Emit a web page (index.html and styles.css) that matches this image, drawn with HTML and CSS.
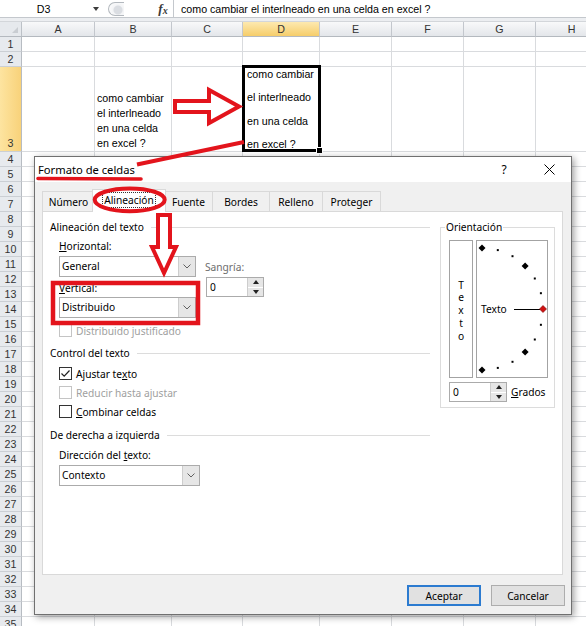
FILE: index.html
```html
<!DOCTYPE html>
<html lang="es">
<head>
<meta charset="utf-8">
<title>Formato de celdas</title>
<link rel="stylesheet" href="styles.css">
</head>
<body>
<div class="app">
  <div class="fbar">
    <div class="namebox"><span class="nb-text">D3</span><span class="nb-arrow"></span></div>
    <div class="grip"><span class="knob"></span></div>
    <div class="fx"><span>f</span><span class="fx-x">x</span></div>
    <div class="formula">como cambiar el interlneado en una celda en excel ?</div>
  </div>
  <div class="band"></div>
  <div class="sheet">
    <div class="corner"><span class="tri"></span></div>
    <div class="ch">A</div><div class="ch">B</div><div class="ch">C</div><div class="ch on">D</div><div class="ch">E</div><div class="ch">F</div><div class="ch">G</div><div class="ch">H</div>
    <b>1</b><i></i><i></i><i></i><i></i><i></i><i></i><i></i><i></i>
    <b>2</b><i></i><i></i><i></i><i></i><i></i><i></i><i></i><i></i>
    <b class="on r3">3</b><i></i><i class="b3"><span>como cambiar</span><span>el interlneado</span><span>en una celda</span><span>en excel ?</span></i><i></i><i class="d3"><span>como cambiar</span><span>el interlneado</span><span>en una celda</span><span>en excel ?</span><span class="handle"></span></i><i></i><i></i><i></i><i></i>
    <b>4</b><i></i><i></i><i></i><i></i><i></i><i></i><i></i><i></i>
    <b>5</b><i></i><i></i><i></i><i></i><i></i><i></i><i></i><i></i>
    <b>6</b><i></i><i></i><i></i><i></i><i></i><i></i><i></i><i></i>
    <b>7</b><i></i><i></i><i></i><i></i><i></i><i></i><i></i><i></i>
    <b>8</b><i></i><i></i><i></i><i></i><i></i><i></i><i></i><i></i>
    <b>9</b><i></i><i></i><i></i><i></i><i></i><i></i><i></i><i></i>
    <b>10</b><i></i><i></i><i></i><i></i><i></i><i></i><i></i><i></i>
    <b>11</b><i></i><i></i><i></i><i></i><i></i><i></i><i></i><i></i>
    <b>12</b><i></i><i></i><i></i><i></i><i></i><i></i><i></i><i></i>
    <b>13</b><i></i><i></i><i></i><i></i><i></i><i></i><i></i><i></i>
    <b>14</b><i></i><i></i><i></i><i></i><i></i><i></i><i></i><i></i>
    <b>15</b><i></i><i></i><i></i><i></i><i></i><i></i><i></i><i></i>
    <b>16</b><i></i><i></i><i></i><i></i><i></i><i></i><i></i><i></i>
    <b>17</b><i></i><i></i><i></i><i></i><i></i><i></i><i></i><i></i>
    <b>18</b><i></i><i></i><i></i><i></i><i></i><i></i><i></i><i></i>
    <b>19</b><i></i><i></i><i></i><i></i><i></i><i></i><i></i><i></i>
    <b>20</b><i></i><i></i><i></i><i></i><i></i><i></i><i></i><i></i>
    <b>21</b><i></i><i></i><i></i><i></i><i></i><i></i><i></i><i></i>
    <b>22</b><i></i><i></i><i></i><i></i><i></i><i></i><i></i><i></i>
    <b>23</b><i></i><i></i><i></i><i></i><i></i><i></i><i></i><i></i>
    <b>24</b><i></i><i></i><i></i><i></i><i></i><i></i><i></i><i></i>
    <b>25</b><i></i><i></i><i></i><i></i><i></i><i></i><i></i><i></i>
    <b>26</b><i></i><i></i><i></i><i></i><i></i><i></i><i></i><i></i>
    <b>27</b><i></i><i></i><i></i><i></i><i></i><i></i><i></i><i></i>
    <b>28</b><i></i><i></i><i></i><i></i><i></i><i></i><i></i><i></i>
    <b>29</b><i></i><i></i><i></i><i></i><i></i><i></i><i></i><i></i>
    <b>30</b><i></i><i></i><i></i><i></i><i></i><i></i><i></i><i></i>
    <b>31</b><i></i><i></i><i></i><i></i><i></i><i></i><i></i><i></i>
    <b>32</b><i></i><i></i><i></i><i></i><i></i><i></i><i></i><i></i>
    <b>33</b><i></i><i></i><i></i><i></i><i></i><i></i><i></i><i></i>
    <b>34</b><i></i><i></i><i></i><i></i><i></i><i></i><i></i><i></i>
    <b>35</b><i></i><i></i><i></i><i></i><i></i><i></i><i></i><i></i>
  </div>

  <div class="dialog">
    <div class="titlebar">
      <div class="title">Formato de celdas</div>
      <div class="help">?</div>
      <div class="close"><svg width="11" height="11" viewBox="0 0 11 11"><path d="M0.5 0.5 L10.5 10.5 M10.5 0.5 L0.5 10.5" stroke="#000" stroke-width="1" fill="none"/></svg></div>
    </div>
    <div class="dbody">
      <div class="tabs">
        <div class="tab t1">Número</div>
        <div class="tab t2 sel"><span class="focus">Alineación</span></div>
        <div class="tab t3">Fuente</div>
        <div class="tab t4">Bordes</div>
        <div class="tab t5">Relleno</div>
        <div class="tab t6">Proteger</div>
      </div>
      <div class="panel">
        <div class="leftcol">
          <div class="sec">Alineación del texto</div>
          <div class="hv">
            <div class="hv-main">
              <div class="lbl"><u>H</u>orizontal:</div>
              <div class="combo c-gen"><span class="val">General</span><span class="btn"><svg width="8" height="5" viewBox="0 0 8 5"><path d="M0.5 0.5 L4 4 L7.5 0.5" stroke="#606060" fill="none"/></svg></span></div>
              <div class="lbl l-vert"><u>V</u>ertical:</div>
              <div class="combo c-dist"><span class="val">Distribuido</span><span class="btn"><svg width="8" height="5" viewBox="0 0 8 5"><path d="M0.5 0.5 L4 4 L7.5 0.5" stroke="#606060" fill="none"/></svg></span></div>
            </div>
            <div class="hv-side">
              <div class="lbl muted l-sang">Sangría:</div>
              <div class="spin s-sang"><span class="val">0</span><span class="arrows"><span><i class="up"></i></span><span><i class="down"></i></span></span></div>
            </div>
          </div>
          <div class="chk dis k1"><span class="box"></span>Distribuido justificado</div>
          <div class="sec s2">Control del texto</div>
          <div class="chk k2"><span class="box"><svg width="11" height="11" viewBox="0 0 11 11"><path d="M1.5 5.5 L4.2 8.2 L9.5 2.5" stroke="#222" stroke-width="1.2" fill="none"/></svg></span>Ajustar te<u>x</u>to</div>
          <div class="chk dis k3"><span class="box"></span>Reducir hasta ajustar</div>
          <div class="chk k3"><span class="box"></span><u>C</u>ombinar celdas</div>
          <div class="sec s3">De derecha a izquierda</div>
          <div class="lbl ind l-dir">Dirección del <u>t</u>exto:</div>
          <div class="combo c-ctx"><span class="val">Contexto</span><span class="btn"><svg width="8" height="5" viewBox="0 0 8 5"><path d="M0.5 0.5 L4 4 L7.5 0.5" stroke="#606060" fill="none"/></svg></span></div>
        </div>
        <fieldset class="orient">
          <legend>Orientación</legend>
          <div class="orow">
            <div class="vtext"><span>T</span><span>e</span><span>x</span><span>t</span><span>o</span></div>
            <svg class="dial" width="72" height="138" viewBox="0 0 72 138">
              <rect x="0.5" y="0.5" width="71" height="137" fill="#fff" stroke="#a3a3a3"/>
              <g fill="#000">
                <path d="M6 4.5 L9.5 8 L6 11.5 L2.5 8Z"/>
                <rect x="20.8" y="9.1" width="2" height="2"/>
                <rect x="35.5" y="15.2" width="2" height="2"/>
                <path d="M49.1 22.4 L52.6 25.9 L49.1 29.4 L45.6 25.9Z"/>
                <rect x="57.8" y="37.5" width="2" height="2"/>
                <rect x="63.9" y="52.2" width="2" height="2"/>
                <rect x="63.9" y="83.8" width="2" height="2"/>
                <rect x="57.8" y="98.5" width="2" height="2"/>
                <path d="M49.1 108.6 L52.6 112.1 L49.1 115.6 L45.6 112.1Z"/>
                <rect x="35.5" y="120.8" width="2" height="2"/>
                <rect x="20.8" y="126.9" width="2" height="2"/>
                <path d="M6 126.5 L9.5 130 L6 133.5 L2.5 130Z"/>
              </g>
              <line x1="38" y1="69.5" x2="64" y2="69.5" stroke="#000" stroke-width="1"/>
              <path d="M67 65.5 L70.5 69 L67 72.5 L63.5 69Z" fill="#d01010" stroke="#700" stroke-width="0.6"/>
              <text x="5" y="73" class="dial-text">Texto</text>
            </svg>
          </div>
          <div class="grow">
            <div class="spin"><span class="val">0</span><span class="arrows"><span><i class="up"></i></span><span><i class="down"></i></span></span></div>
            <span class="glbl"><u>G</u>rados</span>
          </div>
        </fieldset>
      </div>
      <div class="buttons">
        <div class="button default">Aceptar</div>
        <div class="button">Cancelar</div>
      </div>
    </div>
  </div>

  <svg class="marks" width="586" height="626" viewBox="0 0 586 626">
    <g stroke="#e3141c" stroke-width="4" fill="#fff" stroke-linejoin="miter">
      <polygon points="175,101 209,101 209,90 239,106.5 209,123 209,112 175,112"/>
      <polygon points="158,215 170,215 170,247 176,247 164,273 152,247 158,247"/>
    </g>
    <g stroke="#e3141c" fill="none">
      <line x1="244" y1="142" x2="137" y2="164.5" stroke-width="4"/>
      <line x1="38" y1="178.5" x2="141" y2="179" stroke-width="3.6" stroke-linecap="round"/>
      <ellipse cx="129.7" cy="199.8" rx="35" ry="11.4" stroke-width="4"/>
      <rect x="53" y="283" width="145" height="40" stroke-width="4.5"/>
    </g>
  </svg>
</div>
</body>
</html>
```

FILE: styles.css
```css
* { box-sizing: border-box; }
html, body { margin: 0; padding: 0; }
body {
  width: 586px;
  height: 626px;
  overflow: hidden;
  background: #fff;
  font-family: "Liberation Sans", Arial, sans-serif;
  font-size: 10.67px;
  color: #000;
}
.app { position: relative; width: 586px; height: 626px; overflow: hidden; }

/* formula bar */
.fbar { display: flex; height: 18px; border-bottom: 1px solid #c4c8cd; background: #fff; }
.namebox { width: 103px; display: flex; align-items: center; }
.nb-text { width: 87px; text-align: center; }
.nb-arrow {
  width: 0; height: 0;
  border-left: 3.5px solid transparent;
  border-right: 3.5px solid transparent;
  border-top: 4px solid #3c3c3c;
  margin-left: 6px;
}
.grip {
  margin: 1px 0 0 2px;
  width: 48px; height: 15px;
  display: flex; align-items: center;
  padding-left: 3px;
}
.knob {
  width: 16px; height: 14px;
  border-radius: 8px 0 0 8px;
  border: 1px solid #b3b8be;
  border-right: none;
  background: radial-gradient(circle at 9px 7px, #dadde2 0 4px, #f3f4f6 5px, #fff 100%);
}
.fx {
  width: 20px;
  display: flex; align-items: center; justify-content: center;
  font-family: "Liberation Serif", serif;
  font-style: italic; font-weight: bold;
  font-size: 13px; color: #3a3a3a;
}
.fx-x { font-size: 10px; margin-top: 3px; margin-left: 0; }
.formula {
  flex: 1;
  border-left: 1px solid #c4c8cd;
  padding-left: 7px;
  display: flex; align-items: center;
  white-space: nowrap;
}
.band { height: 4px; background: #eceef1; border-bottom: 1px solid #d3d6da; }

/* sheet */
.sheet {
  display: grid;
  grid-template-columns: 22px 73px 77px 71px 77px 72px 72px 72px 72px;
  grid-template-rows: 15px 15px 15px 85px;
  grid-auto-rows: 15px;
}
.sheet > * {
  border-right: 1px solid #d9dbde;
  border-bottom: 1px solid #d9dbde;
  font-style: normal;
  font-weight: normal;
  min-width: 0;
}
.corner {
  background: #e6e9ed;
  border-right: 1px solid #bcc1c7 !important;
  border-bottom: 1px solid #b4b9bf !important;
  display: flex; align-items: flex-end; justify-content: flex-end;
  padding: 0 3px 3px 0;
}
.tri {
  width: 0; height: 0;
  border-left: 6px solid transparent;
  border-bottom: 6px solid #c9cdd2;
}
.ch {
  background: linear-gradient(#f8f9fa, #e3e6ea);
  border-right: 1px solid #c3c7cd !important;
  border-bottom: 1px solid #b4b9bf !important;
  text-align: center;
  line-height: 14px;
  color: #333;
}
.ch.on { background: linear-gradient(#fde9b0, #f6cd6a); }
.sheet > b {
  background: #e7eaee;
  border-right: 1px solid #b7bcc2;
  border-bottom: 1px solid #cbcfd4;
  text-align: center;
  line-height: 14px;
  color: #333;
}
.sheet > b.on { background: linear-gradient(90deg, #fde4a0, #f8d27a); }
.sheet > b.r3 { display: flex; align-items: flex-end; justify-content: center; line-height: 15px; }
.b3 {
  display: flex; flex-direction: column; justify-content: flex-end;
  padding-left: 2px; line-height: 15px; white-space: nowrap;
}
.d3 {
  position: relative; z-index: 2;
  display: flex; flex-direction: column; justify-content: space-between;
  padding: 1px 0 0 4px; line-height: 13px; white-space: nowrap;
}
.d3::after {
  content: "";
  position: absolute;
  left: -1px; top: -2px; right: -2px; bottom: -1px;
  border: 3px solid #000;
}
.d3 .handle {
  position: absolute;
  right: -4px; bottom: -3px;
  width: 7px; height: 7px;
  background: #000;
  border: 1px solid #fff;
  z-index: 3;
}

/* dialog */
.dialog {
  position: absolute;
  left: 34px; top: 156px;
  width: 538px; height: 459px;
  border: 1px solid #707070;
  background: #f0f0f0;
  box-shadow: 2px 2px 7px rgba(0, 0, 0, 0.38);
  display: flex; flex-direction: column;
  font-family: "Noto Sans", "Open Sans", sans-serif;
  font-size: 10.2px;
  color: #000;
  z-index: 5;
}
.titlebar { height: 25px; background: #fff; display: flex; align-items: center; }
.title { flex: 1; padding-left: 3px; font-size: 11.2px; }
.help { width: 46px; text-align: center; font-size: 12px; }
.close { width: 44px; display: flex; justify-content: center; align-items: center; }
.close svg { display: block; }
.dbody { flex: 1; display: flex; flex-direction: column; padding: 7px 8px 8px 7px; }

.tabs { display: flex; align-items: flex-end; height: 22px; }
.tab {
  height: 20px;
  border: 1px solid #d9d9d9;
  border-bottom: none;
  background: #f0f0f0;
  display: flex; align-items: center; justify-content: center;
  margin-left: -1px;
  white-space: nowrap;
}
.t1 { width: 53px; margin-left: 0; }
.t2 { width: 74px; }
.t3 { width: 49px; }
.t4 { width: 58px; }
.t5 { width: 54px; }
.t6 { width: 59px; }
.tab.sel {
  height: 23px;
  margin: 0 -2px -1px -3px;
  background: #fff;
  position: relative; z-index: 1;
  align-items: flex-start;
  padding-top: 3px;
}
.tab.sel + .tab { margin-left: 0; }
.focus { outline: 1px dotted #333; outline-offset: 0; padding: 0 1px; line-height: 14px; }

.panel {
  height: 364px;
  border: 1px solid #d9d9d9;
  background: #fff;
  padding: 8px 7px 0 7px;
  display: flex;
}
.leftcol { width: 380px; display: flex; flex-direction: column; }
.sec { display: flex; align-items: center; height: 14px; line-height: 14px; white-space: nowrap; }
.sec::after { content: ""; flex: 1; height: 1px; background: #dcdcdc; margin-left: 7px; }
.s2 { margin-top: 9px; }
.s3 { margin-top: 10px; }
.lbl { line-height: 13px; height: 13px; white-space: nowrap; }
.muted { color: #6d6d6d; }
.ind { padding-left: 9px; }

.hv { display: flex; margin-top: 6px; padding-left: 9px; }
.hv-main { width: 137px; display: flex; flex-direction: column; }
.hv-side { margin-left: 9px; display: flex; flex-direction: column; }
.c-gen { margin-top: 3px; }
.l-vert { margin-top: 5px; }
.c-dist { margin-top: 2px; }
.l-sang { margin-top: 21px; }
.s-sang { margin-top: 3px; margin-left: 1px; }

.combo { display: flex; width: 137px; height: 21px; border: 1px solid #ababab; background: #fff; }
.combo .val { flex: 1; padding-left: 2px; line-height: 19px; white-space: nowrap; }
.combo .btn {
  width: 17px;
  border-left: 1px solid #cdcdcd;
  background: #e6e6e6;
  display: flex; align-items: center; justify-content: center;
}
.combo .btn svg { display: block; }
.c-ctx { width: 141px; margin-top: 3px; margin-left: 9px; }
.l-dir { margin-top: 7px; }

.spin { display: flex; width: 58px; height: 20px; border: 1px solid #ababab; background: #fff; }
.spin .val { flex: 1; padding-left: 3px; line-height: 18px; }
.spin .arrows { width: 16px; display: flex; flex-direction: column; border-left: 1px solid #cdcdcd; }
.spin .arrows span {
  flex: 1;
  background: #e6e6e6;
  display: flex; align-items: center; justify-content: center;
}
.spin .arrows span + span { border-top: 1px solid #fff; }
.up, .down { width: 0; height: 0; border-left: 3px solid transparent; border-right: 3px solid transparent; }
.up { border-bottom: 4px solid #222; }
.down { border-top: 4px solid #222; }

.chk { display: flex; align-items: center; height: 13px; padding-left: 9px; white-space: nowrap; }
.box {
  width: 13px; height: 13px;
  border: 1px solid #333;
  background: #fff;
  margin-right: 4px;
  display: flex; align-items: center; justify-content: center;
  flex: none;
}
.box svg { display: block; }
.chk.dis { color: #a0a0a0; }
.chk.dis .box { border-color: #c4c4c4; }
.k1 { margin-top: 6px; }
.k2 { margin-top: 7px; }
.k3 { margin-top: 6px; }

/* orientation */
.orient {
  margin: 0 0 0 10px;
  width: 115px;
  height: 188px;
  padding: 6px 6px 5px 8px;
  border: 1px solid #dcdcdc;
  min-width: 0;
}
.orient legend { padding: 0 1px; margin-left: -4px; line-height: 14px; font-size: 10.2px; }
.orow { display: flex; gap: 3px; }
.vtext {
  width: 24px; height: 138px;
  border: 1px solid #a3a3a3;
  display: flex; flex-direction: column; align-items: center; justify-content: center;
  line-height: 12.8px;
  padding-top: 3px;
}
.dial { display: block; }
.dial-text { font-family: "Noto Sans", "Open Sans", sans-serif; font-size: 10.2px; fill: #000; }
.grow { display: flex; align-items: center; margin-top: 4px; }
.glbl { margin-left: 4px; }

/* buttons */
.buttons { display: flex; justify-content: flex-end; gap: 10px; margin-top: 10px; margin-right: -2px; }
.button {
  width: 74px; height: 21px;
  border: 1px solid #adadad;
  background: #e1e1e1;
  display: flex; align-items: center; justify-content: center;
}
.button.default { border: 2px solid #2c7bd0; width: 74px; }

/* annotation overlay */
.marks { position: absolute; left: 0; top: 0; z-index: 10; pointer-events: none; }
```
